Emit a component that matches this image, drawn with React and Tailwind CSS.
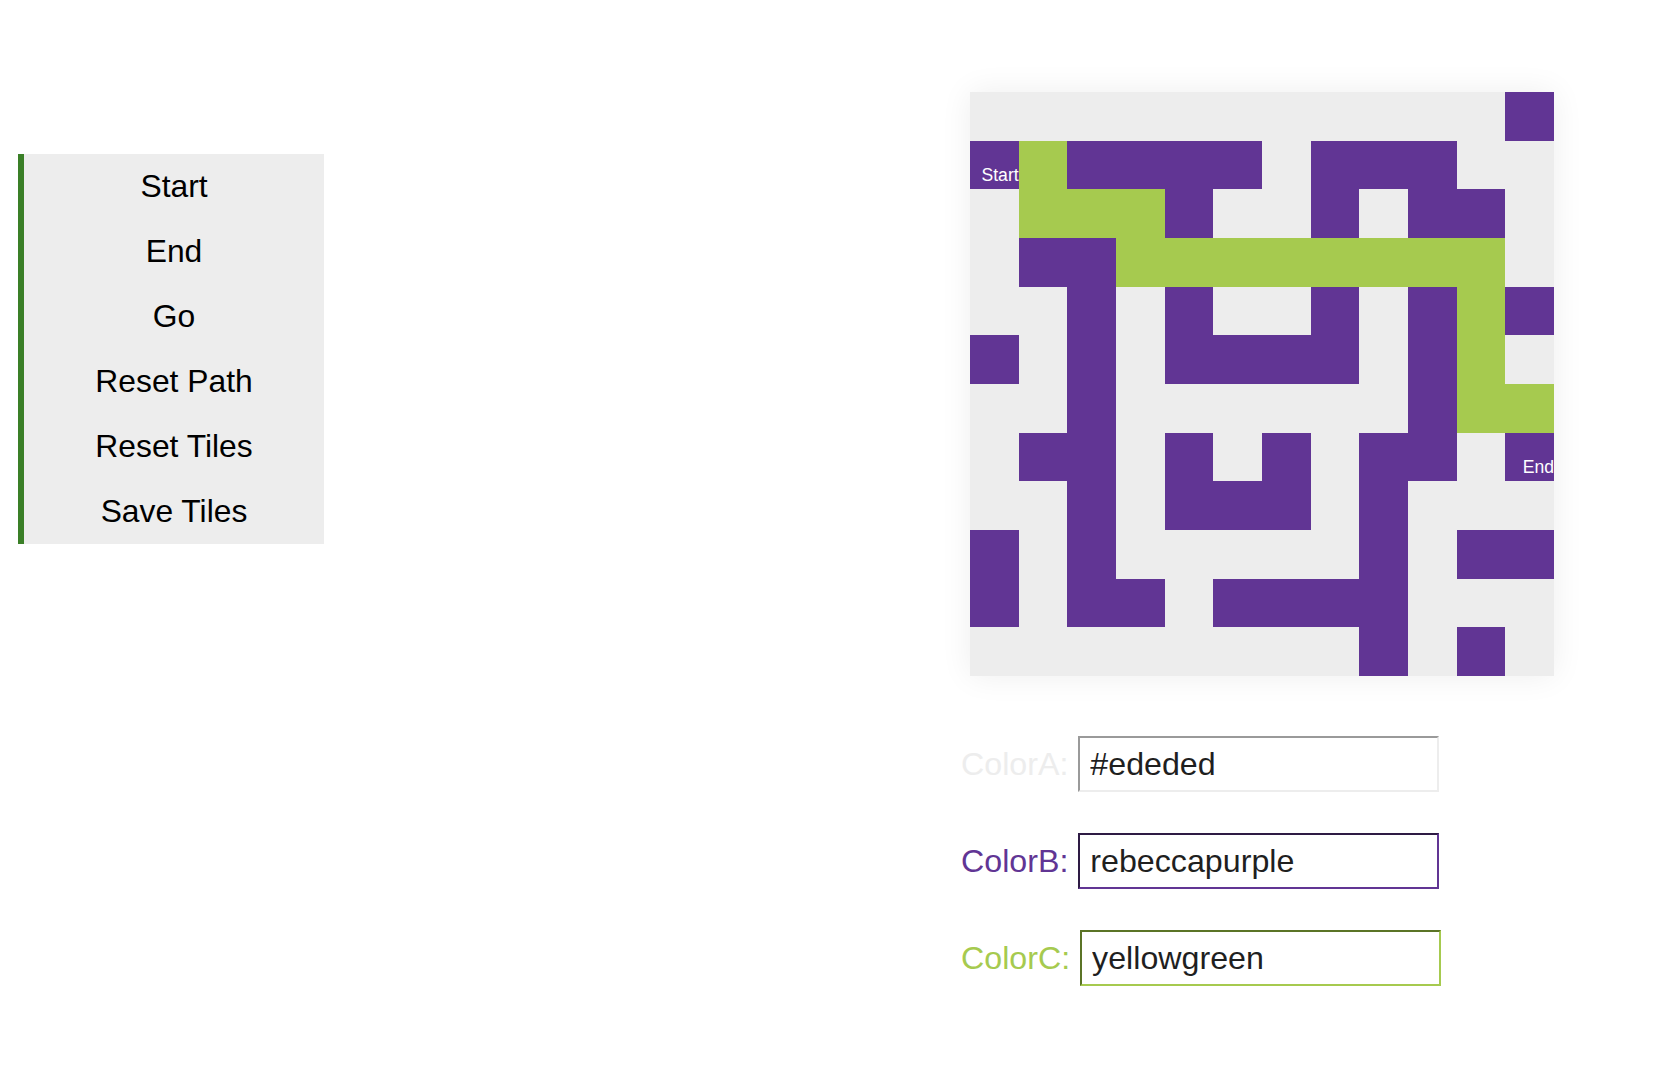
import { useState } from 'react';

const ROWS = [
  '...........P',
  'PGPPPP.PPP..',
  '.GGGP..P.PP.',
  '.PPGGGGGGGG.',
  '..P.P..P.PGP',
  'P.P.PPPP.PG.',
  '..P......PGG',
  '.PP.P.P.PP.P',
  '..P.PPP.P...',
  'P.P.....P.PP',
  'P.PP.PPPP...',
  '........P.P.',
];

const TILE = {
  '.': 'bg-[#ededed]',
  P: 'bg-[#613594]',
  G: 'bg-[#a6ca4f]',
};

const MENU = ['Start', 'End', 'Go', 'Reset Path', 'Reset Tiles', 'Save Tiles'];

function Cell({ kind, label }) {
  return (
    <div className={`flex items-end justify-end overflow-hidden pb-[1px] ${TILE[kind]}`}>
      {label && <span className="whitespace-nowrap text-[17.6px] text-white">{label}</span>}
    </div>
  );
}

export default function App() {
  const [colors, setColors] = useState({ a: '#ededed', b: 'rebeccapurple', c: 'yellowgreen' });

  return (
    <div className="flex min-h-screen bg-white font-['Liberation_Sans',Arial,sans-serif] text-[32.2px]">
      {/* Menu */}
      <nav className="ml-[18px] mt-[154px] w-[306px] self-start border-l-[6px] border-[#3a7f27] bg-[#ededed] text-[31.8px]">
        {MENU.map((item) => (
          <div key={item} className="flex h-[65px] items-center justify-center text-black">
            {item}
          </div>
        ))}
      </nav>

      <div className="ml-[637px] mt-[92px]">
        {/* Maze */}
        <div className="ml-[9px] grid h-[584px] w-[584px] grid-cols-12 grid-rows-12 shadow-[0_0_30px_rgba(0,0,0,0.07)]">
          {ROWS.map((row, r) =>
            row.split('').map((kind, c) => (
              <Cell
                key={`${r}-${c}`}
                kind={kind}
                label={r === 1 && c === 0 ? 'Start' : r === 7 && c === 11 ? 'End' : null}
              />
            ))
          )}
        </div>

        {/* Colour inputs */}
        <div className="mt-[60px] flex flex-col gap-[41px]">
          <div className="flex items-center gap-[10px]">
            <label className="text-[#ededed]">ColorA:</label>
            <input
              value={colors.a}
              onChange={(e) => setColors({ ...colors, a: e.target.value })}
              className="h-[56px] w-[361px] border-2 border-t-[#9a9a9a] border-l-[#9a9a9a] border-r-[#ededed] border-b-[#ededed] px-[10px] text-[#1f1f1f] outline-none"
            />
          </div>
          <div className="flex items-center gap-[10px]">
            <label className="text-[#613594]">ColorB:</label>
            <input
              value={colors.b}
              onChange={(e) => setColors({ ...colors, b: e.target.value })}
              className="h-[56px] w-[361px] border-2 border-t-[#2e1b44] border-l-[#2e1b44] border-r-[#613594] border-b-[#613594] px-[10px] text-[#1f1f1f] outline-none"
            />
          </div>
          <div className="flex items-center gap-[10px]">
            <label className="text-[#a6ca4f]">ColorC:</label>
            <input
              value={colors.c}
              onChange={(e) => setColors({ ...colors, c: e.target.value })}
              className="h-[56px] w-[361px] border-2 border-t-[#5b7426] border-l-[#5b7426] border-r-[#a6ca4f] border-b-[#a6ca4f] px-[10px] text-[#1f1f1f] outline-none"
            />
          </div>
        </div>
      </div>
    </div>
  );
}
